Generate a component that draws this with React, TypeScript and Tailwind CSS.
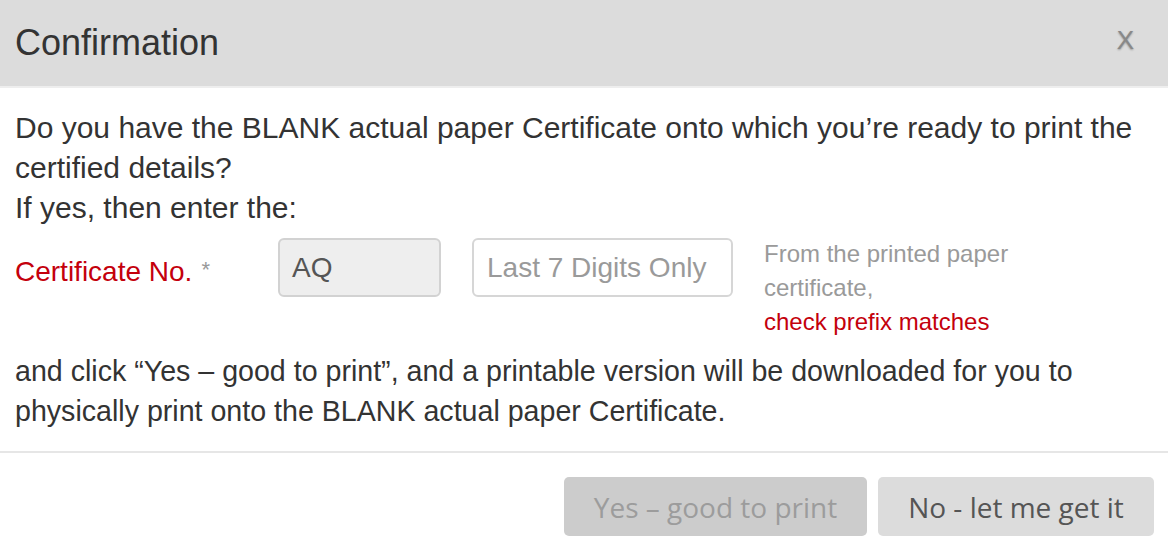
import React from "react";

export default function App() {
  return (
    <div
      className="w-[1168px] h-[556px] bg-white text-[#333] overflow-hidden"
      style={{ fontFamily: '"Liberation Sans", Arial, sans-serif' }}
    >
      <div className="h-[88px] bg-[#dcdcdc] border-b-[2px] border-[#eeeeee] flex items-center justify-between pl-[15px] pr-[34px]">
        <h1 className="text-[36px] leading-none text-[#333] font-normal">Confirmation</h1>
        <span className="text-[26px] leading-none text-[#888] [text-shadow:0_1px_2px_rgba(0,0,0,0.3)] -mt-[6px]">X</span>
      </div>

      <div className="pt-[20px] pb-[20px] pl-[15px] pr-[15px]">
        <p className="text-[30px] leading-[40px]">
          Do you have the BLANK actual paper Certificate onto which you’re ready to print the
          <br />
          certified details?
          <br />
          If yes, then enter the:
        </p>

        <div className="flex mt-[10px]">
          <div className="w-[263px] pt-[17px] flex items-start">
            <span className="text-[28px] leading-[34px] text-[#c4000c]">Certificate No.</span>
            <span className="text-[22px] leading-[30px] text-[#999] ml-[9px]">*</span>
          </div>
          <div className="w-[163px] h-[59px] rounded-[6px] border-2 border-[#d2d2d2] bg-[#eeeeee] flex items-center pl-[12px] text-[28px] text-[#555]">
            AQ
          </div>
          <div className="w-[261px] h-[59px] ml-[31px] rounded-[6px] border-2 border-[#d6d6d6] bg-white flex items-center pl-[13px] text-[28px] text-[#9a9a9a]">
            Last 7 Digits Only
          </div>
          <div className="ml-[31px] text-[24px] leading-[34px] text-[#9a9a9a] -mt-px">
            From the printed paper
            <br />
            certificate,
            <br />
            <span className="text-[#c4000c]">check prefix matches</span>
          </div>
        </div>

        <p className="text-[28.6px] leading-[40px] mt-[12px]">
          and click “Yes – good to print”, and a printable version will be downloaded for you to
          <br />
          physically print onto the BLANK actual paper Certificate.
        </p>
      </div>

      <div className="border-t-2 border-[#e6e6e6] flex justify-end gap-[11px] pt-[24px] pr-[14px]"
        style={{ fontFamily: '"Open Sans", sans-serif' }}
      >
        <button className="w-[303px] h-[59px] rounded-[5px] bg-[#cccccc] text-[#9c9c9c] text-[28px] leading-none">
          Yes – good to print
        </button>
        <button className="w-[276px] h-[59px] rounded-[5px] bg-[#dcdcdc] text-[#555] text-[28px] leading-none">
          No - let me get it
        </button>
      </div>
    </div>
  );
}
